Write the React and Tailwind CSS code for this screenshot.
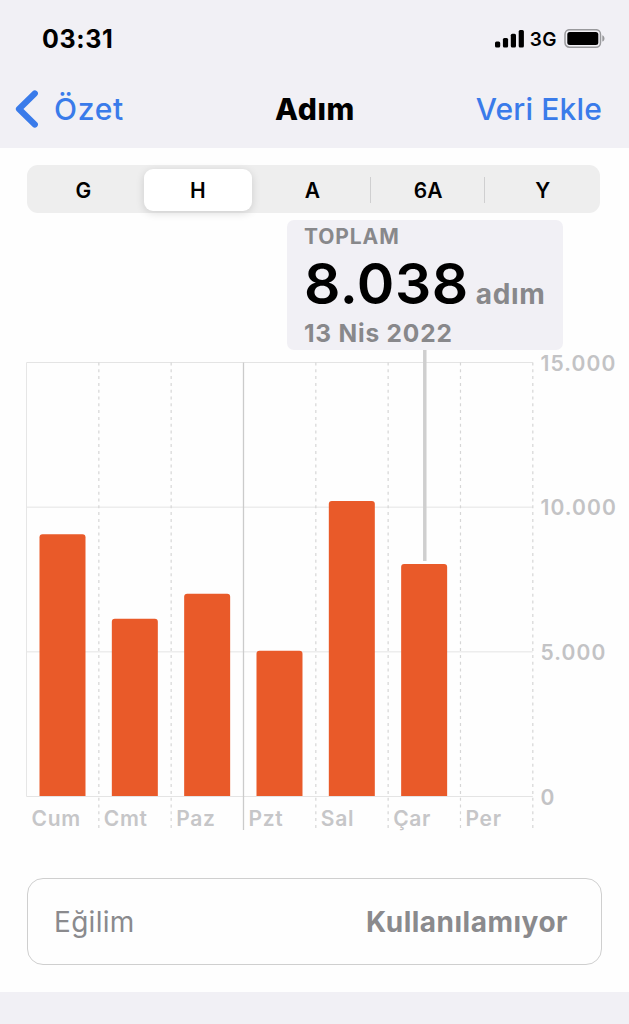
const ranges = ['G', 'H', 'A', '6A', 'Y'];

const days = [
    { label: 'Cum', steps: 9060 },
    { label: 'Cmt', steps: 6140 },
    { label: 'Paz', steps: 7010 },
    { label: 'Pzt', steps: 5040 },
    { label: 'Sal', steps: 10210 },
    { label: 'Çar', steps: 8038 },
    { label: 'Per', steps: 0 },
];

const ticks = [
    { value: 15000, label: '15.000' },
    { value: 10000, label: '10.000' },
    { value: 5000, label: '5.000' },
    { value: 0, label: '0' },
];

const LEFT = 26.5;
const COL = 72.33;
const TOP = 12.5;
const BASE = 446.5;

const yFor = (value) => BASE - (value / 15000) * (BASE - TOP);

function StatusBar() {
    return (
        <div className="flex h-[76px] items-center justify-between pt-[2px] pr-[23px] pl-[42px]">
            <span className="text-[25px] leading-none font-bold tracking-[0.6px]">03:31</span>
            <div className="flex items-center">
                <svg width="30" height="19" viewBox="0 0 30 19">
                    <rect x="0" y="11.5" width="5.2" height="6" rx="1.5" />
                    <rect x="7.9" y="8" width="5.2" height="9.5" rx="1.5" />
                    <rect x="15.8" y="3.8" width="5.2" height="13.7" rx="1.5" />
                    <rect x="23.7" y="0" width="5.2" height="17.5" rx="1.5" />
                </svg>
                <span className="ml-[5px] text-[19px] leading-none font-semibold tracking-[0.5px]">3G</span>
                <svg className="ml-[7px]" width="42" height="20" viewBox="0 0 42 20">
                    <rect x="1" y="0.700" width="35.5" height="17.500" rx="4.5" fill="none" stroke="#99999c" strokeWidth="1.5" />
                    <rect x="3.3" y="3" width="31" height="13" rx="2.5" />
                    <path d="M38.3 6.2v6.4c1.4-.5 2.2-1.7 2.2-3.2s-.8-2.7-2.2-3.2z" fill="#99999c" />
                </svg>
            </div>
        </div>
    );
}

function NavBar() {
    return (
        <div className="grid h-[72px] grid-cols-[1fr_auto_1fr] items-center pr-[27px] pb-[6px] pl-[15px] text-[30px] leading-none">
            <a href="#" className="flex items-center text-[#3a7bea]">
                <svg width="24" height="38" viewBox="0 0 24 38" fill="none" stroke="currentColor" strokeWidth="6.2" strokeLinecap="round" strokeLinejoin="round">
                    <path d="M19.8 3.5 4 19l15.8 15.5" />
                </svg>
                <span className="ml-[15px] font-medium tracking-[0.7px]">Özet</span>
            </a>
            <h1 className="ml-[13px] text-center font-extrabold tracking-[0.6px]">Adım</h1>
            <a href="#" className="text-right font-medium tracking-[0.15px] whitespace-nowrap text-[#3a7bea]">Veri Ekle</a>
        </div>
    );
}

function RangeTabs() {
    return (
        <div className="mr-[29px] ml-[27px] grid h-[48px] grid-cols-5 rounded-[11px] bg-[#eeeeee]">
            {ranges.map((r, i) => (
                <button
                    key={r}
                    className={
                        i === 1
                            ? 'mr-[4px] ml-[2px] mt-[4px] mb-[2px] rounded-[9px] bg-white text-[21px] leading-none font-semibold shadow-[0_2px_8px_rgba(0,0,0,0.14)]'
                            : i > 2
                              ? 'flex items-center pt-[2px] text-[21px] leading-none font-semibold'
                              : 'pt-[2px] pr-[2px] text-[21px] leading-none font-semibold'
                    }
                >
                    {i > 2 && <span className="-ml-px h-[26px] w-px bg-[#cfcfd0]" />}
                    {i > 2 ? <span className="flex-1">{r}</span> : r}
                </button>
            ))}
        </div>
    );
}

function StepChart() {
    return (
        <svg className="block" width="629" height="490" viewBox="0 0 629 490">
            {ticks.map((t) => (
                <g key={t.value}>
                    <line x1={LEFT} x2={LEFT + COL * 7} y1={yFor(t.value)} y2={yFor(t.value)} stroke="#e4e4e4" />
                    <text x="540.5" y={yFor(t.value) + 8} fill="#c3c3c5" className="text-[21px] font-semibold tracking-[1.1px]">
                        {t.label}
                    </text>
                </g>
            ))}
            <line x1={LEFT} x2={LEFT} y1={TOP} y2={BASE} stroke="#e6e6e6" />
            {[1, 2, 3, 4, 5, 6, 7].map((n) => (
                <line
                    key={n}
                    x1={LEFT + COL * n}
                    x2={LEFT + COL * n}
                    y1={TOP}
                    y2="480"
                    stroke={n === 3 ? '#cbcbcb' : '#d6d6d6'}
                    strokeWidth={n === 3 ? 1.3 : 1.2}
                    strokeDasharray={n === 3 ? undefined : '3 3.8'}
                />
            ))}
            {days.map((d, i) => {
                const x = LEFT + COL * i + 13;
                const y = yFor(d.steps);
                return (
                    <g key={d.label}>
                        {d.steps > 0 && (
                            <path d={`M${x} ${BASE - 0.5}V${y + 3}q0-3 3-3h40q3 0 3 3V${BASE - 0.5}z`} fill="#e95a29" />
                        )}
                        <text x={LEFT + COL * i + 5} y="476" fill="#c6c6c8" className="text-[21px] font-semibold tracking-[0.7px]">
                            {d.label}
                        </text>
                    </g>
                );
            })}
            <line x1="424.8" x2="424.8" y1="0" y2="211" stroke="#cfcfcf" strokeWidth="3.5" />
        </svg>
    );
}

function Callout() {
    return (
        <div className="ml-[287px] flex h-[130px] w-[276px] flex-col rounded-[7px] bg-[#f1f0f5] pl-[17px] text-[#88888b]">
            <span className="mt-[6px] text-[21px] leading-[22px] font-bold tracking-[0.9px]">TOPLAM</span>
            <div className="mt-[7px] flex h-[58px] items-baseline leading-[58px]">
                <span className="text-[57px] font-semibold tracking-[0.5px] text-black">8.038</span>
                <span className="ml-[7px] text-[28px] font-bold tracking-[0.7px]">adım</span>
            </div>
            <span className="mt-[6px] text-[24.5px] leading-[28px] font-bold tracking-[0.8px]">13 Nis 2022</span>
        </div>
    );
}

export default function App() {
    return (
        <div className="flex h-[1024px] w-[629px] flex-col overflow-hidden bg-[#f1f0f5] font-['Inter',sans-serif] text-black">
            <header>
                <StatusBar />
                <NavBar />
            </header>
            <main className="h-[844px] bg-[#fefefe] pt-[17px]">
                <RangeTabs />
                <div className="mt-[7px]">
                    <Callout />
                    <StepChart />
                </div>
                <div className="mt-[38px] mr-[27px] ml-[27px] flex h-[87px] items-center justify-between rounded-[16px] border-[1.5px] border-[#cfcfcf] pr-[33px] pl-[26px] text-[28px] leading-none text-[#8a8a8d]">
                    <span className="tracking-[0.3px]">Eğilim</span>
                    <span className="pt-px text-[28px] font-bold tracking-[0.5px]">Kullanılamıyor</span>
                </div>
            </main>
        </div>
    );
}
